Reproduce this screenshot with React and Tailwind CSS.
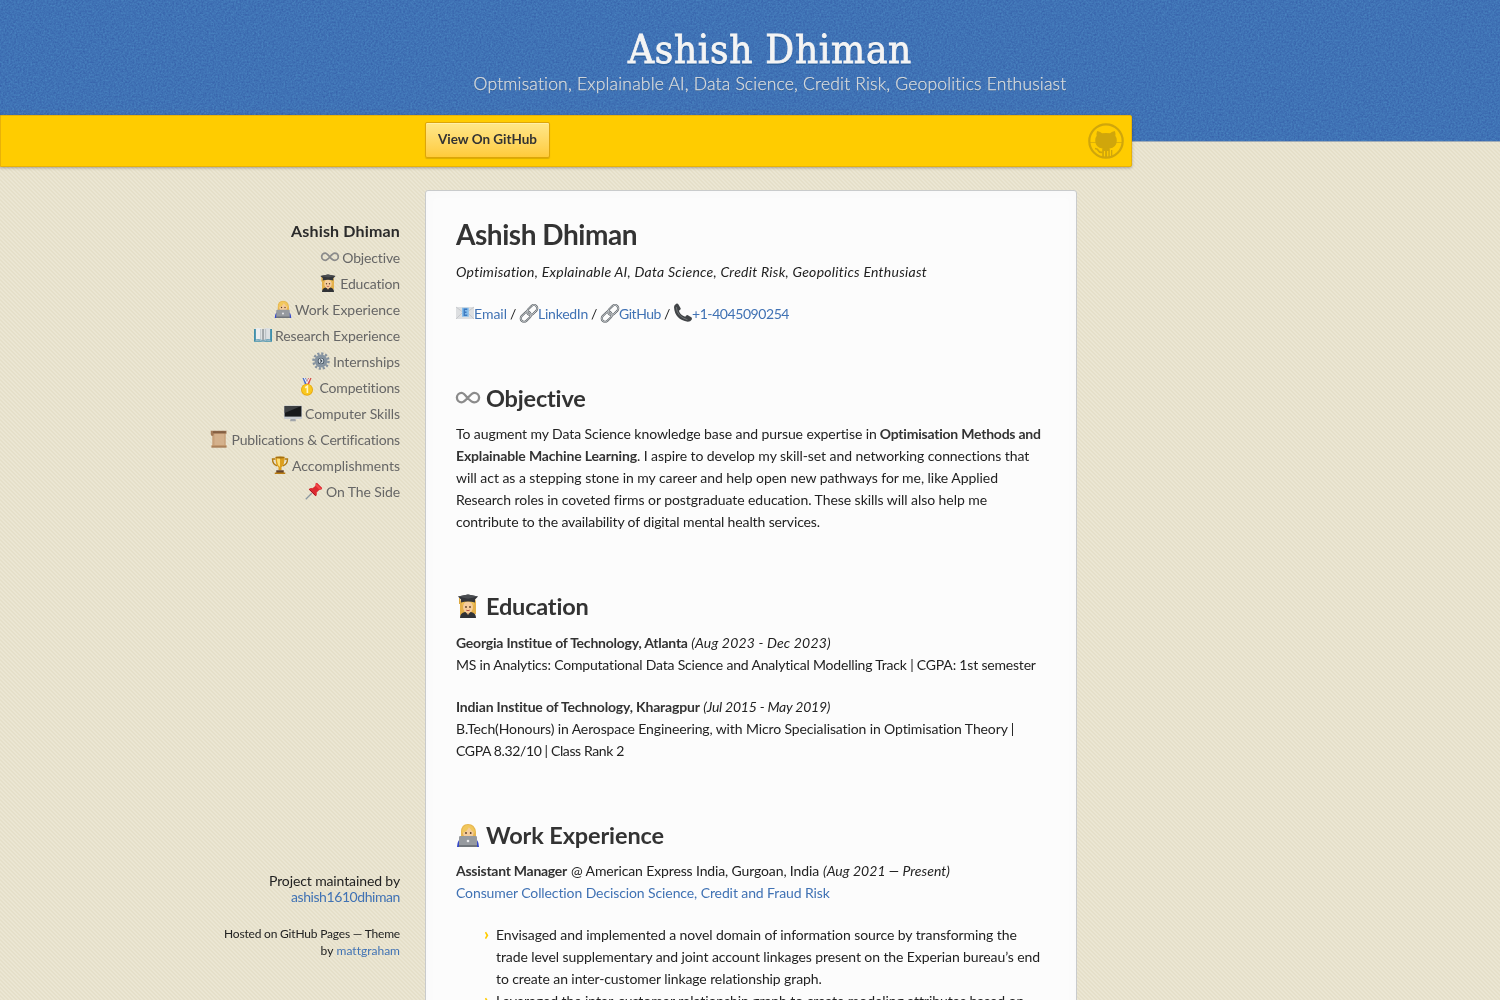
import { useLayoutEffect, useRef } from "react";

/* Single run of text whose tracking is tuned to a given measure. */
function T({ w, className = "", children, as: Tag = "span" }) {
  const ref = useRef(null);
  useLayoutEffect(() => {
    const el = ref.current;
    el.style.letterSpacing = "0px";
    const natural = el.getBoundingClientRect().width;
    el.style.letterSpacing = (w - natural) / el.textContent.length + "px";
  }, [w, children]);
  return (
    <Tag ref={ref} className={"inline-block whitespace-pre " + className}>
      {children}
    </Tag>
  );
}

const art = {
  infinity: (
    <path d="M12 12.500C9 8.500 7.400 6.800 5.700 6.800a4.700 4.700 0 0 0 0 9.600c2 0 3.500-1.600 6.300-4.800s4.500-4.800 6.300-4.800a4.700 4.700 0 0 1 0 9.600c-2 0-3.300-1-6.300-3.900Z" fill="none" stroke="#8b8b8b" strokeWidth="2.300" />
  ),
  grad: (
    <>
      <path d="M4 22V8Q4 3 12 3t8 5v12l-2 1H5Z" fill="#e4b04a" />
      <path d="M4 24q0-5 5-6h6q5 1 5 6Z" fill="#303236" />
      <path d="M9 17h6l-3 4Z" fill="#e0ad7a" />
      <ellipse cx="12" cy="13" rx="5" ry="6" fill="#f5cd9c" />
      <path d="M6 12q2-5 6-4.500T18 12V7H6Z" fill="#efc257" />
      <circle cx="10" cy="13" r=".9" fill="#593a23" />
      <circle cx="14" cy="13" r=".9" fill="#593a23" />
      <path d="M10.300 16.200q1.700 1 3.400 0" stroke="#b54d45" strokeWidth="1" fill="none" />
      <path d="M2 2.500 12 .5l10 2-3 3v3q-7-2-14 0v-3Z" fill="#34363a" />
      <path d="M2 2.500 12 .5l10 2-10 2.300Z" fill="#4b4e52" />
      <path d="M3.500 4v6" stroke="#d9a02d" strokeWidth=".9" />
    </>
  ),
  tech: (
    <>
      <path d="M5 17V9q0-8 7-8t8 8v8Z" fill="#e7b64f" />
      <path d="M1 24q0-8 6-9h10q6 1 6 9Z" fill="#3649c8" />
      <ellipse cx="12.300" cy="9.700" rx="5.300" ry="5.700" fill="#f5cc9b" />
      <path d="M6 10q5-1 7-6 2 4 6 6-1-8-7-8T6 10Z" fill="#f1c75c" />
      <circle cx="10" cy="10" r=".9" fill="#593a23" />
      <circle cx="14.700" cy="10" r=".9" fill="#593a23" />
      <rect x="3" y="13" width="18" height="10.500" rx="1.300" fill="#969a9f" />
      <path d="M3 22h18v2H3Z" fill="#70757b" />
      <circle cx="12" cy="18" r="1.300" fill="#e9eaec" />
    </>
  ),
  book: (
    <>
      <path d="M0 4h24v17H0Z" fill="#3f8fab" />
      <path d="M2.500 3q6-1 9.500 1v15q-5-2-9.500-1Z" fill="#eceeef" />
      <path d="M21.500 3q-6-1-9.500 1v15q5-2 9.500-1Z" fill="#dde0e2" />
      <path d="M12 4v15" stroke="#7d8489" strokeWidth="1.700" />
      <path d="M9 4v14M15.500 4v14" stroke="#b4babe" strokeWidth="1.200" />
      <path d="M2 19.300q6-1 10 1 4-2 10-1" stroke="#c3cbd0" fill="none" />
    </>
  ),
  gear: (
    <>
      <circle cx="12" cy="12" r="10" fill="none" stroke="#8592a0" strokeWidth="3.400" strokeDasharray="2.900 2.336" />
      <circle cx="12" cy="12" r="6.800" fill="#b9c3cd" stroke="#8694a1" strokeWidth="3.600" />
      <circle cx="12" cy="12" r="4" fill="#dce3e9" stroke="#50606e" strokeWidth="1.600" />
      <path d="m11 10 2 2-2 2" stroke="#35424f" strokeWidth="1.500" fill="none" />
    </>
  ),
  medal: (
    <>
      <path d="M6 0h4.500l3 9h-4Z" fill="#4a6fcb" />
      <path d="M18 0h-4.500l-3 9h4Z" fill="#d94e4a" />
      <path d="m8.500 0 3.500 7 3.500-7" stroke="#f4f2f4" strokeWidth="1.500" fill="none" />
      <circle cx="12" cy="15.800" r="8" fill="#e9a90d" />
      <circle cx="12" cy="15.500" r="6.700" fill="#f9c81f" />
      <path d="m9.500 13 3-2v9" stroke="#fff5c4" strokeWidth="2.200" fill="none" />
    </>
  ),
  screen: (
    <>
      <path d="M9 19h6l1 4H8Z" fill="#a1a5aa" />
      <rect x="0" y="2" width="24" height="18" rx="1" fill="#c8ccd0" />
      <path d="M.8 2.800h22.400v14H.8Z" fill="#17191b" />
      <path d="M.8 2.800h22.400L.8 12Z" fill="#3d4043" />
    </>
  ),
  scroll: (
    <>
      <path d="M3 2h18v19H3Z" fill="#c9a27b" />
      <path d="M6 4h13v16H6Z" fill="#d4b18c" />
      <path d="M1 1h21v4H5q0 3-2 3T1 5Z" fill="#a37a57" />
      <path d="M4 2h17v1.500H4Z" fill="#725039" />
      <path d="M2 20h20v3.500H2Z" fill="#c3996e" />
      <path d="M2 22.500h20" stroke="#8d6848" />
    </>
  ),
  trophy: (
    <>
      <path d="M6 4H2q0 7 6 9m10-9h4q0 7-6 9" stroke="#b17a12" strokeWidth="1.800" fill="none" />
      <path d="M6 1h12q0 12-4 14v4h-4v-4Q6 13 6 1Z" fill="#dc9e1c" />
      <path d="M8 3q0 8 3 11h1V3Z" fill="#ffe079" />
      <path d="M7 19h10v4H7Z" fill="#65432a" />
      <path d="M5 22h14v2H5Z" fill="#b97c12" />
      <ellipse cx="12" cy="2" rx="6" ry="1.200" fill="#a56f11" />
    </>
  ),
  pin: (
    <>
      <path d="m9 15-8 8" stroke="#8a97a0" strokeWidth="1.700" />
      <path d="m14 2 2-1 7 7-1 2-3 .500-3.500 3.500q1 4-1.500 5L5 10q1-3 5-1.800L14 5Z" fill="#dc2930" />
      <path d="m15 2 7 7-3 1-5-5Z" fill="#f5484a" />
      <path d="m6 10 8 8" stroke="#a4151f" strokeWidth="1.300" />
    </>
  ),
  mail: (
    <>
      <path d="M0 4h24v16H0Z" fill="#dddfe1" />
      <path d="m0 20 9-9m15 9-9-9M0 4l12 9 12-9" stroke="#bfc2c6" strokeWidth="1" fill="none" />
      <rect x="8" y="5" width="9" height="12" fill="#84bdec" />
      <path d="M15 7h-4v8h4m-4-4h3" stroke="#3c78be" strokeWidth="1.800" fill="none" />
    </>
  ),
  link: (
    <>
      <g fill="none" stroke="#5d6368" strokeWidth="2.700">
        <rect x="8.500" y="3.500" width="15.500" height="9" rx="4.500" transform="rotate(-45 16.300 8)" />
        <rect x="0" y="12.500" width="15.500" height="9" rx="4.500" transform="rotate(-45 7.700 17)" />
      </g>
      <g fill="none" stroke="#cfd2d5" strokeWidth="1.100">
        <rect x="8.500" y="3.500" width="15.500" height="9" rx="4.500" transform="rotate(-45 16.300 8)" />
        <rect x="0" y="12.500" width="15.500" height="9" rx="4.500" transform="rotate(-45 7.700 17)" />
      </g>
    </>
  ),
  phone: (
    <>
      <path d="M0 4q0-3 3-4.500 2-.5 3 1L9 6q0 2-2.500 3 2 6 8.500 8 1-2.500 3-2.500l5.500 3.500q1 1.500 0 3-1.500 2.500-5 2.500Q1 21 0 4Z" fill="#414447" />
      <path d="M3 4q1 13 15 17" stroke="#74787b" strokeWidth="1.200" fill="none" />
    </>
  ),
};

function Emoji({ name, className = "size-[18px] -mt-[2px]" }) {
  return (
    <svg viewBox="0 0 24 24" className={"inline-block shrink-0 overflow-visible " + className} aria-hidden="true">
      {art[name]}
    </svg>
  );
}

const nav = [
  ["infinity", "Objective", 58],
  ["grad", "Education", 60],
  ["tech", "Work Experience", 105],
  ["book", "Research Experience", 125],
  ["gear", "Internships", 67],
  ["medal", "Competitions", 81],
  ["screen", "Computer Skills", 95],
  ["scroll", "Publications & Certifications", 169],
  ["trophy", "Accomplishments", 108],
  ["pin", "On The Side", 74],
];

function Line({ children, className = "" }) {
  return <div className={"flex h-[22px] items-center whitespace-nowrap leading-[22px] " + className}>{children}</div>;
}

function Heading({ icon, w, children, className = "" }) {
  return (
    <h2 className={"flex h-[30px] items-center gap-[6px] text-[23.500px] font-bold leading-[30px] text-[#333] " + className}>
      <Emoji name={icon} className="size-6" />
      <T w={w}>{children}</T>
    </h2>
  );
}

function Octocat() {
  return (
    <svg viewBox="0 0 36 36" className="size-9" fill="#d0a60b" aria-label="GitHub">
      <circle cx="18" cy="18" r="16.700" fill="none" stroke="#d0a60b" strokeWidth="2.200" />
      <path d="M9 8.500q.3-.6 1-.3 2.300.6 4 2.100 4-.8 8 0 1.700-1.500 4-2.100.7-.3 1 .3.800 2.200.3 4.300 1.700 2 1.500 5-.3 7-7.300 7.700h-7Q7.500 24.800 7.200 17.800q-.2-3 1.500-5Q8.200 10.700 9 8.500Z" />
      <path d="M14.200 26.500q0-2 2-2h3.600q2 0 2 2V34h-1.500v-6h-1.200v7h-2v-7h-1.200v6h-1.700Z" />
      <path d="M23 27h1.300v6.500H23Z" />
      <path d="M7 25.500q2.500.2 3.700 2.500 1 1.800 3.800 1.300" fill="none" stroke="#d0a60b" strokeWidth="1.700" />
      <path d="M2 19.500h6m20 0h6" stroke="#d0a60b" strokeWidth=".7" />
    </svg>
  );
}

const bullets = [
  [
    ["Envisaged and implemented a novel domain of information source by transforming the", 521],
    ["trade level supplementary and joint account linkages present on the Experian bureau’s end", 544],
    ["to create an inter-customer linkage relationship graph.", 326],
  ],
  [["Leveraged the inter-customer relationship graph to create modeling attributes based on", 528]],
];

export default function App() {
  return (
    <div className="h-[1000px] w-[1500px] overflow-hidden bg-[#e9e4d0] bg-[repeating-linear-gradient(45deg,#e5dfc9_0px,#e5dfc9_1.414px,#ebe6d3_1.414px,#ebe6d3_2.828px)] font-['Lato',sans-serif] text-[14px] text-[#222]">
      <header className="relative h-[142px] border-b border-[#9eabb8] bg-[#3f72b5] pl-10 text-center">
        <svg className="absolute inset-0 h-full w-full opacity-20 mix-blend-overlay" aria-hidden="true">
          <filter id="grain" colorInterpolationFilters="sRGB">
            <feTurbulence type="fractalNoise" baseFrequency="0.55" numOctaves="2" />
            <feColorMatrix type="matrix" values="1 0 0 0 0  1 0 0 0 0  1 0 0 0 0  0 0 0 0 1" />
          </filter>
          <rect width="100%" height="100%" filter="url(#grain)" />
        </svg>
        <div className="relative flex flex-col items-center pt-[24px]">
          <h1 className="flex h-[50px] items-center font-['DejaVu_Serif_Condensed','DejaVu_Serif',serif] text-[40px] leading-[50px] text-[#f4f4f4] [font-stretch:condensed] [-webkit-text-stroke:0.8px_#f4f4f4] [text-shadow:0_2px_0_#2a5f9c]">
            <T w={284}>Ashish Dhiman</T>
          </h1>
          <p className="-mt-px flex h-[22px] items-center text-[17.500px] font-light leading-[22px] text-[#dadcde] [-webkit-text-stroke:0.250px_#dadcde] [text-shadow:0_1px_0_#36618f]">
            <T w={593.5}>Optmisation, Explainable AI, Data Science, Credit Risk, Geopolitics Enthusiast</T>
          </p>
        </div>
      </header>

      <div className="relative -mt-[27px] flex h-[52px] w-[1132px] items-start justify-between rounded-r-[2px] border border-[#e8b208] bg-[#ffcc00] pl-[424px] pr-[7px] pt-[6px] shadow-[0_1px_3px_rgba(0,0,0,0.3)]">
        <button className="flex h-9 w-[125px] items-center justify-center rounded-[2px] border border-[#dda509] bg-linear-to-b from-[#ffe788] to-[#ffcb38] pb-px text-[13.500px] font-bold text-[#333] shadow-[0_1px_1px_rgba(0,0,0,0.15),inset_0_1px_0_#fff0a8]">
          <T w={99}>View On GitHub</T>
        </button>
        <div className="pt-[1px]"><Octocat /></div>
      </div>

      <div className="mt-[23px] flex items-start gap-[25px]">
        <aside className="flex h-[810px] w-[400px] shrink-0 flex-col items-end pt-[28px] text-[#666]">
          <div className="flex h-[27px] items-start text-base font-bold leading-[26px] text-[#2b2b2b]">
            <T w={109}>Ashish Dhiman</T>
          </div>
          <ul>
            {nav.map(([icon, label, w]) => (
              <li key={label} className="flex h-[26px] items-center justify-end gap-[3px] leading-[26px]">
                <Emoji name={icon} className="size-[18px] -mt-[3px]" />
                <T w={w}>{label}</T>
              </li>
            ))}
          </ul>
          <footer className="mt-auto pb-[41px] text-right text-[#222]">
            <div className="flex h-4 items-center justify-end leading-4"><T w={131}>Project maintained by</T></div>
            <div className="flex h-4 items-center justify-end leading-4 text-[#4072b4]"><T w={109}>ashish1610dhiman</T></div>
            <div className="mt-5 flex h-[17px] items-center justify-end text-[12px] leading-[17px]"><T w={176}>Hosted on GitHub Pages — Theme</T></div>
            <div className="flex h-[17px] items-center justify-end gap-[3px] text-[12px] leading-[17px]">
              <T w={13}>by</T>
              <T w={63} className="text-[#4072b4]">mattgraham</T>
            </div>
          </footer>
        </aside>

        <main className="h-[830px] w-[652px] rounded-[3px] border border-[#c9cbcc] bg-[#fcfcfc] px-[30px] pt-[26px] shadow-[inset_0_0_12px_#f8f8f8]">
          <h1 className="flex h-[34px] items-center text-[28px] font-bold leading-[34px] text-[#333]">
            <T w={181}>Ashish Dhiman</T>
          </h1>
          <Line className="mt-[10px] italic">
            <T w={470.5}>Optimisation, Explainable AI, Data Science, Credit Risk, Geopolitics Enthusiast</T>
          </Line>
          <Line className="mt-5">
            <Emoji name="mail" />
            <T w={33} className="text-[#4072b4]">Email</T>
            <span className="w-[13px] pl-[3px]">/</span>
            <Emoji name="link" />
            <T w={50} className="text-[#4072b4]">LinkedIn</T>
            <span className="w-[13px] pl-[3px]">/</span>
            <Emoji name="link" />
            <T w={42} className="text-[#4072b4]">GitHub</T>
            <span className="w-[13px] pl-[3px]">/</span>
            <Emoji name="phone" />
            <T w={97} className="text-[#4072b4]">+1-4045090254</T>
          </Line>

          <Heading icon="infinity" w={100} className="mt-[58px]">Objective</Heading>
          <section className="mt-[10px]">
            <Line className="gap-[3px]">
              <T w={421}>To augment my Data Science knowledge base and pursue expertise in</T>
              <T w={161.5} className="font-bold text-[#333]">Optimisation Methods and</T>
            </Line>
            <Line>
              <T w={181} className="font-bold text-[#333]">Explainable Machine Learning</T>
              <T w={392.5}>. I aspire to develop my skill-set and networking connections that</T>
            </Line>
            <Line><T w={542}>will act as a stepping stone in my career and help open new pathways for me, like Applied</T></Line>
            <Line><T w={531}>Research roles in coveted firms or postgraduate education. These skills will also help me</T></Line>
            <Line><T w={364}>contribute to the availability of digital mental health services.</T></Line>
          </section>

          <Heading icon="grad" w={103} className="mt-[58px]">Education</Heading>
          <section className="mt-[11px]">
            <Line className="gap-[3.500px]">
              <T w={232} className="font-bold text-[#333]">Georgia Institue of Technology, Atlanta</T>
              <T w={139.5} className="italic">(Aug 2023 - Dec 2023)</T>
            </Line>
            <Line><T w={580.5}>MS in Analytics: Computational Data Science and Analytical Modelling Track | CGPA: 1st semester</T></Line>
            <Line className="mt-5 gap-[3.500px]">
              <T w={244} className="font-bold text-[#333]">Indian Institue of Technology, Kharagpur</T>
              <T w={127} className="italic">(Jul 2015 - May 2019)</T>
            </Line>
            <Line><T w={559}>B.Tech(Honours) in Aerospace Engineering, with Micro Specialisation in Optimisation Theory |</T></Line>
            <Line><T w={168}>CGPA 8.32/10 | Class Rank 2</T></Line>
          </section>

          <Heading icon="tech" w={178} className="mt-[58px]">Work Experience</Heading>
          <section className="mt-[10px]">
            <Line className="gap-[4px]">
              <T w={111} className="font-bold text-[#333]">Assistant Manager</T>
              <T w={248}>@ American Express India, Gurgoan, India</T>
              <T w={127} className="italic">(Aug 2021 — Present)</T>
            </Line>
            <Line><T w={374} className="text-[#4072b4]">Consumer Collection Deciscion Science, Credit and Fraud Risk</T></Line>
            <ul className="mt-5 pl-7">
              {bullets.map((lines, i) => (
                <li key={i} className="flex">
                  <span className="w-3 shrink-0 text-[17px] font-black leading-[20px] text-[#ffcc00]">›</span>
                  <div>
                    {lines.map(([text, w]) => (
                      <Line key={text}><T w={w}>{text}</T></Line>
                    ))}
                  </div>
                </li>
              ))}
            </ul>
          </section>
        </main>
      </div>
    </div>
  );
}
